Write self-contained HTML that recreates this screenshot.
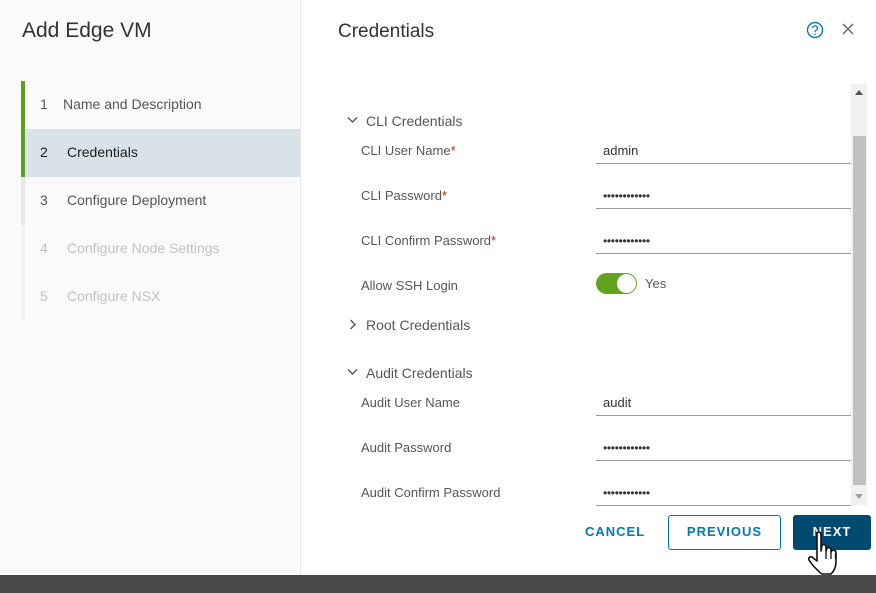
<!DOCTYPE html>
<html><head><style>
*{margin:0;padding:0;box-sizing:border-box}
body{width:876px;height:593px;overflow:hidden;background:#fff;font-family:"Liberation Sans",sans-serif;position:relative}
.left{position:absolute;left:0;top:0;width:301px;height:575px;background:#fafafa;border-right:1px solid #e8e8e8}
.bottom{position:absolute;left:0;top:575px;width:876px;height:18px;background:#4a4a4a}
.t{position:absolute;white-space:nowrap}
.step{position:absolute;left:21px;width:279px;height:48px;font-size:14px;line-height:46px;color:#565656}
.step .n{position:absolute;left:19px}
.step .l{position:absolute;left:46px}
.lbl{position:absolute;left:361px;font-size:13px;color:#565656}
.req{color:#c92100}
.inp{position:absolute;left:596px;width:255px;height:25px;border-bottom:1px solid #9a9a9a;font-size:13px;color:#333;padding-left:7px;padding-top:3px;line-height:18px}
.dots{font-size:12px;letter-spacing:-0.3px;line-height:18px}
.sec{position:absolute;left:348px;font-size:14px;color:#565656}
</style></head><body>
<div class="left"></div>
<div class="t" style="left:22px;top:19px;font-size:21px;color:#333">Add Edge VM</div>
<div style="position:absolute;left:21px;top:81px;width:4px;height:96px;background:#5aa220"></div>
<div style="position:absolute;left:21px;top:177px;width:4px;height:48px;background:#e8e8e8"></div>
<div style="position:absolute;left:21px;top:225px;width:4px;height:96px;background:#f3f3f3"></div>
<div class="step" style="top:81px;left:25px"><span class="n" style="left:15px">1</span><span class="l" style="left:38px">Name and Description</span></div>
<div class="step" style="top:129px;left:25px;width:275px;background:#d8e3e9;color:#1b1b1b"><span class="n" style="left:15px">2</span><span class="l" style="left:42px">Credentials</span></div>
<div class="step" style="top:177px"><span class="n">3</span><span class="l">Configure Deployment</span></div>
<div class="step" style="top:225px;color:#c2c2c2"><span class="n">4</span><span class="l">Configure Node Settings</span></div>
<div class="step" style="top:273px;color:#c2c2c2"><span class="n">5</span><span class="l">Configure NSX</span></div>

<div class="t" style="left:338px;top:21px;font-size:19px;color:#333">Credentials</div>
<svg style="position:absolute;left:806px;top:21px" width="18" height="18" viewBox="0 0 18 18"><circle cx="9" cy="9" r="7.5" fill="none" stroke="#0079b8" stroke-width="1.4"/><path d="M6.6 7.2a2.4 2.4 0 1 1 3.2 2.2c-.6.3-.8.7-.8 1.3v.6" fill="none" stroke="#0079b8" stroke-width="1.3"/><circle cx="9" cy="13.3" r=".8" fill="#0079b8"/></svg>
<svg style="position:absolute;left:842px;top:23px" width="12" height="12"><path d="M1 1L11 11M11 1L1 11" stroke="#666" stroke-width="1.4"/></svg>

<div style="position:absolute;left:851px;top:84px;width:16px;height:421px;background:#f1f1f1"></div>
<div style="position:absolute;left:853px;top:136px;width:13px;height:349px;background:#c1c1c1"></div>
<svg style="position:absolute;left:855px;top:90px" width="8" height="5"><path d="M0 5L4 0L8 5Z" fill="#505050"/></svg>
<svg style="position:absolute;left:855px;top:494px" width="8" height="5"><path d="M0 0L4 5L8 0Z" fill="#a0a0a0"/></svg>

<svg style="position:absolute;left:347px;top:116px" width="11" height="8"><path d="M1 1.5L5.5 6L10 1.5" fill="none" stroke="#565656" stroke-width="1.4"/></svg>
<div class="sec" style="left:366px;top:113px">CLI Credentials</div>
<div class="lbl" style="top:143px">CLI User Name<span class="req">*</span></div>
<div class="inp" style="top:139px">admin</div>
<div class="lbl" style="top:188px">CLI Password<span class="req">*</span></div>
<div class="inp dots" style="top:184px">••••••••••••</div>
<div class="lbl" style="top:233px">CLI Confirm Password<span class="req">*</span></div>
<div class="inp dots" style="top:229px">••••••••••••</div>
<div class="lbl" style="top:278px">Allow SSH Login</div>
<div style="position:absolute;left:596px;top:273px;width:41px;height:21px;border-radius:11px;background:#62a420"></div>
<div style="position:absolute;left:617px;top:274px;width:19px;height:19px;border-radius:50%;background:#fff"></div>
<div class="t" style="left:645px;top:276px;font-size:13px;color:#565656">Yes</div>

<svg style="position:absolute;left:349px;top:319px" width="8" height="11"><path d="M1.5 1L6 5.5L1.5 10" fill="none" stroke="#565656" stroke-width="1.4"/></svg>
<div class="sec" style="left:366px;top:317px">Root Credentials</div>

<svg style="position:absolute;left:347px;top:368px" width="11" height="8"><path d="M1 1.5L5.5 6L10 1.5" fill="none" stroke="#565656" stroke-width="1.4"/></svg>
<div class="sec" style="left:366px;top:365px">Audit Credentials</div>
<div class="lbl" style="top:395px">Audit User Name</div>
<div class="inp" style="top:391px">audit</div>
<div class="lbl" style="top:440px">Audit Password</div>
<div class="inp dots" style="top:436px">••••••••••••</div>
<div class="lbl" style="top:485px">Audit Confirm Password</div>
<div class="inp dots" style="top:481px">••••••••••••</div>

<div class="t" style="left:585px;top:524px;font-size:13px;font-weight:bold;letter-spacing:1px;color:#0079b8">CANCEL</div>
<div style="position:absolute;left:668px;top:515px;width:113px;height:35px;border:1px solid #0079b8;border-radius:3px;font-size:13px;font-weight:bold;letter-spacing:1px;color:#0079b8;text-align:center;line-height:31px">PREVIOUS</div>
<div style="position:absolute;left:793px;top:515px;width:78px;height:35px;background:#004a70;border-radius:3px;font-size:13px;font-weight:bold;letter-spacing:1px;color:#fff;text-align:center;line-height:33px">NEXT</div>
<svg style="position:absolute;left:806px;top:530px" width="36" height="50" viewBox="0 0 36 50"><path d="M11 3c1.5-1.5 4-1 4 1.5V21l1-6c2-1 4 0 4 1.5V21l1-3c2-1 4 0 4 1.5V22l1-1.5c2-.8 4 .2 4 2V32c0 6-3 10-5 12H16c-3-2-10-9-13-14-1-2 1-4 3-3l5 4V4.5z" fill="#fff" stroke="#111" stroke-width="1.6" stroke-linejoin="round"/><path d="M20 21v8M25 22v7M29.5 23v6" stroke="#111" stroke-width="1.3"/></svg>

<div class="bottom"></div>
</body></html>
